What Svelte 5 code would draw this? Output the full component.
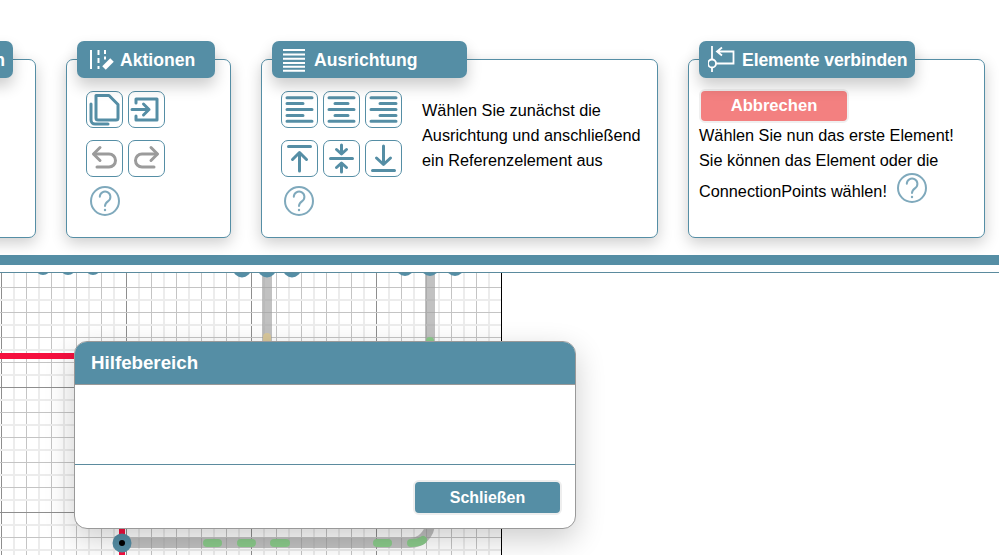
<script>
  const helpText = "Wählen Sie nun das erste Element!";

  // grid lines of the canvas, in page coordinates
  const steps = Array.from({ length: 21 }, (_, i) => i);
  const rows = Array.from({ length: 12 }, (_, i) => i);
  const greens = ["M207 543H218", "M241 543H252", "M274 543H286", "M377 543H388", "M411 543q8 0 12-3"];
  const points = [
    { x: 43, y: 267, r: 8 },
    { x: 68, y: 267, r: 8 },
    { x: 93, y: 267, r: 8 },
    { x: 242, y: 268.5, r: 9 },
    { x: 267, y: 268.5, r: 9 },
    { x: 292, y: 268.5, r: 9 },
    { x: 405, y: 267, r: 9 },
    { x: 430, y: 267, r: 9 },
    { x: 455, y: 267, r: 9 }
  ];
</script>

{#snippet help()}
  <svg class="help" width="30" height="30" viewBox="0 0 30 30">
    <circle class="help-ring" cx="15" cy="15" r="14" />
    <path class="help-mark" d="M9.8 10.8a5.3 5.3 0 1 1 8.4 4.3c-2 1.4-3.2 2.4-3.2 5" />
    <circle class="help-dot" cx="15" cy="24" r="1.2" />
  </svg>
{/snippet}

<main class="app">
  <section class="ribbon">
    <div class="card card-view">
      <h2 class="tab tab-view"><span>Optionen</span></h2>
    </div>

    <div class="card card-actions">
      <h2 class="tab tab-actions">
        <svg width="28" height="24" viewBox="0 0 28 24" class="tab-icon">
          <path d="M5 1v19" stroke-width="2" />
          <path d="M12.500 1v5M12.500 9v5M12.500 17v3" stroke-width="2" />
          <path d="M19 1v4M19 7.500v3" stroke-width="2" />
          <path d="M18 19l8-8" stroke-width="5" />
        </svg>
        <span>Aktionen</span>
      </h2>
      <div class="tools">
        <button class="tool" aria-label="Kopieren">
          <svg viewBox="0 0 37 37">
            <path d="M10 4.500h13l9 9v13.500a2 2 0 0 1-2 2H12a2 2 0 0 1-2-2z" />
            <path d="M5 13v16a4 4 0 0 0 4 4h13" />
          </svg>
        </button>
        <button class="tool" aria-label="Einfügen">
          <svg viewBox="0 0 37 37">
            <path d="M8 12V8h21v21H8v-4" />
            <path d="M4 18.500h17M15.500 13l5.500 5.500-5.500 5.500" />
          </svg>
        </button>
        <button class="tool muted" aria-label="Rückgängig">
          <svg viewBox="0 0 37 37">
            <path d="M14 7.500L7.500 14l6.500 6.500" />
            <path d="M8 14h15a6.500 6.500 0 0 1 0 13H11" />
          </svg>
        </button>
        <button class="tool muted" aria-label="Wiederholen">
          <svg viewBox="0 0 37 37">
            <path d="M23 7.500l6.500 6.500-6.500 6.500" />
            <path d="M29 14H14a6.500 6.500 0 0 0 0 13h12" />
          </svg>
        </button>
      </div>
      <div class="help-row">{@render help()}</div>
    </div>

    <div class="card card-align">
      <h2 class="tab tab-align">
        <svg width="26" height="24" viewBox="0 0 26 24" class="tab-icon">
          <path d="M2 1h22M2 5.500h22M2 9.700h22M2 13.900h22M2 17.700h22M2 21.800h22" stroke-width="2" />
        </svg>
        <span>Ausrichtung</span>
      </h2>
      <div class="align-body">
        <div>
          <div class="tools three">
            <button class="tool" aria-label="Links">
              <svg viewBox="0 0 37 37"><path d="M6 6.700h25M6 12.500h16M6 18.500h25M6 24.500h16M6 30.300h25" /></svg>
            </button>
            <button class="tool" aria-label="Mitte">
              <svg viewBox="0 0 37 37"><path d="M6 6.700h25M12 12.500h13M6 18.500h25M12 24.500h13M6 30.300h25" /></svg>
            </button>
            <button class="tool" aria-label="Rechts">
              <svg viewBox="0 0 37 37"><path d="M6 6.700h25M15 12.500h16M6 18.500h25M15 24.500h16M6 30.300h25" /></svg>
            </button>
            <button class="tool" aria-label="Oben">
              <svg viewBox="0 0 37 37"><path d="M7.500 6.500h22M18.500 31V13M11.500 19.500l7-7 7 7" /></svg>
            </button>
            <button class="tool" aria-label="Zentriert">
              <svg viewBox="0 0 37 37"><path d="M7.500 18.500h22M18.500 5v8M13.500 9.500l5 4.500 5-4.500M18.500 32v-8M13.500 27.500l5-4.500 5 4.500" /></svg>
            </button>
            <button class="tool" aria-label="Unten">
              <svg viewBox="0 0 37 37"><path d="M7.500 30.500h22M18.500 6v18M11.500 18l7 6.500 7-6.500" /></svg>
            </button>
          </div>
          <div class="help-row help-row-align">{@render help()}</div>
        </div>
        <p class="hint">Wählen Sie zunächst die<br />Ausrichtung und anschließend<br />ein Referenzelement aus</p>
      </div>
    </div>

    <div class="card card-connect">
      <h2 class="tab tab-connect">
        <svg width="30" height="30" viewBox="0 0 30 30" class="tab-icon">
          <path d="M4 0v26" stroke-width="1.800" />
          <circle cx="4" cy="17.500" r="4" stroke-width="1.800" fill="#558ea5" />
          <path d="M8 17.500h17.500V5.500H9M14 1.500L9 5.500l5 4" stroke-width="1.800" />
        </svg>
        <span>Elemente verbinden</span>
      </h2>
      <div class="connect-body">
        <button class="cancel">Abbrechen</button>
        <p class="line">{helpText}</p>
        <p class="line">Sie können das Element oder die</p>
        <p class="line last">ConnectionPoints wählen! {@render help()}</p>
      </div>
    </div>
  </section>

  <div class="bar"></div>
  <div class="bar-gap"></div>

  <div class="workspace">
    <svg class="canvas" width="502" height="282" viewBox="0 273 502 282">
      {#each steps as i}
        <rect x={13 + i * 25} y="273" width="2" height="282" fill="#ececec" />
        {#if i < 20}
          <rect x={26 + i * 25} y="273" width="1" height="282" fill={i % 5 === 4 ? "#8e8e8e" : "#c4c4c4"} />
        {/if}
      {/each}
      <rect x="1" y="273" width="1" height="282" fill="#8e8e8e" />
      {#each rows as i}
        <rect x="0" y={299 + i * 25} width="501" height="2" fill="#ececec" />
        <rect x="0" y={287 + i * 25} width="501" height="1" fill={i % 5 === 4 ? "#8e8e8e" : "#c4c4c4"} />
      {/each}
      <rect x="501" y="273" width="1" height="282" fill="#000" />

      <path class="wire" d="M267 273v75" />
      <path class="wire" d="M430 273v250a20 20 0 0 1-20 20H122" />
      <path d="M267 337v8" class="dash tan" />
      <path d="M430 341v4" class="dash green" />
      {#each greens as d}
        <path {d} class="dash green" />
      {/each}
      <path d="M0 356h80" class="red" />
      <path d="M122 525v30" class="red" />

      {#each points as p}
        <circle cx={p.x} cy={p.y} r={p.r} fill="#558ea5" />
      {/each}
      <circle cx="122" cy="543" r="9.500" fill="#558ea5" />
      <circle cx="122" cy="543" r="3" fill="#000" />
    </svg>

    <div class="dialog">
      <h3 class="dialog-title">Hilfebereich</h3>
      <div class="dialog-body"></div>
      <div class="dialog-foot">
        <button class="close">Schließen</button>
      </div>
    </div>
  </div>
</main>

<style>
  :global(body) {
    background: #fff;
  }
  .app {
    height: 555px;
    width: 999px;
    overflow: hidden;
    display: flex;
    flex-direction: column;
    font-family: "Liberation Sans", Arial, sans-serif;
    font-size: 16.25px;
    color: #000;
  }
  .ribbon {
    flex: none;
    height: 196px;
    padding-top: 59px;
    margin-left: -114px;
    display: flex;
    gap: 30px;
  }
  .card {
    flex: none;
    position: relative;
    box-sizing: border-box;
    height: 179px;
    background: #fff;
    border: 1px solid #558ea5;
    border-radius: 7px;
    box-shadow: 0 5px 15px rgba(0, 0, 0, 0.2);
  }
  .card-view {
    width: 150px;
  }
  .card-actions {
    width: 165px;
    padding: 31px 19px 0;
  }
  .card-align {
    width: 397px;
    padding: 31px 19px 0;
  }
  .card-connect {
    width: 297px;
    padding: 29px 10px 0;
  }
  .tab {
    position: absolute;
    top: -19px;
    left: 10px;
    box-sizing: border-box;
    height: 37px;
    margin: 0;
    padding-top: 2px;
    display: flex;
    align-items: center;
    background: #558ea5;
    color: #fff;
    border-radius: 7px;
    font-size: 17.6px;
    font-weight: bold;
    box-shadow: 0 8px 15px rgba(0, 0, 0, 0.2);
  }
  .tab-view {
    width: 116px;
    justify-content: flex-end;
    padding-right: 8px;
  }
  .tab-actions {
    width: 138px;
    padding-left: 9px;
    gap: 6px;
  }
  .tab-align {
    width: 195px;
    padding-left: 9px;
    gap: 7px;
  }
  .tab-connect {
    width: 216px;
    padding-left: 9px;
    gap: 4px;
    letter-spacing: -0.1px;
  }
  .tab-icon {
    flex: none;
    fill: none;
    stroke: #fff;
  }
  .tools {
    display: grid;
    grid-template-columns: repeat(2, 37px);
    column-gap: 5px;
    row-gap: 12px;
  }
  .tools.three {
    grid-template-columns: repeat(3, 37px);
  }
  .tool {
    width: 37px;
    height: 37px;
    padding: 0;
    background: #fff;
    border: 1px solid #558ea5;
    border-radius: 7px;
    box-sizing: border-box;
    overflow: hidden;
  }
  .tool svg {
    display: block;
    margin: -1px;
    width: 37px;
    height: 37px;
    fill: none;
    stroke: #558ea5;
    stroke-width: 3;
    stroke-linecap: round;
    stroke-linejoin: round;
  }
  .tool.muted svg {
    stroke: #9b9b9b;
  }
  .help-row {
    margin: 9px 0 0 4px;
    height: 30px;
  }
  .help-row-align {
    margin-left: 3px;
  }
  .help {
    display: inline-block;
    flex: none;
  }
  .help-ring {
    fill: none;
    stroke: #7fa9bc;
    stroke-width: 2;
  }
  .help-mark {
    fill: none;
    stroke: #7fa9bc;
    stroke-width: 2;
    stroke-linecap: round;
  }
  .help-dot {
    fill: #7fa9bc;
  }
  .align-body {
    display: flex;
    gap: 20px;
  }
  .hint {
    margin: 7px 0 0;
    line-height: 25px;
    white-space: nowrap;
  }
  .connect-body {
    display: flex;
    flex-direction: column;
    align-items: flex-start;
  }
  .cancel {
    box-sizing: border-box;
    width: 150px;
    height: 34px;
    padding: 0;
    background: #f38080;
    color: #fff;
    border: 2px solid #f0f0f0;
    border-radius: 6px;
    font: bold 16.6px "Liberation Sans", Arial, sans-serif;
  }
  .line {
    margin: 0;
    line-height: 25px;
    white-space: nowrap;
  }
  .last {
    display: flex;
    align-items: center;
    gap: 10px;
    margin-top: 3px;
    height: 30px;
  }
  .last .help {
    margin-bottom: 6px;
  }
  .bar {
    flex: none;
    height: 10px;
    background: #558ea5;
  }
  .bar-gap {
    flex: none;
    height: 7px;
    border-bottom: 1px solid #5b8b9e;
  }
  .workspace {
    position: relative;
    flex: 1;
    overflow: hidden;
  }
  .canvas {
    display: block;
  }
  .wire {
    fill: none;
    stroke: #a0a0a0;
    stroke-opacity: 0.65;
    stroke-width: 10;
  }
  .dash {
    fill: none;
    stroke-width: 8;
    stroke-linecap: round;
  }
  .green {
    stroke: #8bcb8b;
  }
  .tan {
    stroke: #d8c79b;
  }
  .red {
    fill: none;
    stroke: #f5103f;
    stroke-width: 6;
  }
  .dialog {
    position: absolute;
    left: 74px;
    top: 68px;
    box-sizing: border-box;
    width: 502px;
    height: 188px;
    display: flex;
    flex-direction: column;
    background: #fff;
    border: 1px solid #999;
    border-radius: 13px;
    overflow: hidden;
    box-shadow: 0 10px 30px rgba(0, 0, 0, 0.2);
  }
  .dialog-title {
    flex: none;
    box-sizing: border-box;
    height: 43px;
    margin: 0;
    padding: 0 16px;
    display: flex;
    align-items: center;
    background: #558ea5;
    color: #fff;
    font-size: 18.72px;
    border-bottom: 1px solid #999;
  }
  .dialog-body {
    flex: none;
    height: 79px;
    border-bottom: 1px solid #5b8b9e;
  }
  .dialog-foot {
    flex: 1;
    display: flex;
    justify-content: flex-end;
    align-items: flex-start;
    padding: 15px 13px 0 0;
  }
  .close {
    box-sizing: border-box;
    width: 149px;
    height: 35px;
    padding: 0;
    background: #558ea5;
    color: #fff;
    border: 2px solid #eee;
    border-radius: 6px;
    font: bold 16px "Liberation Sans", Arial, sans-serif;
  }
</style>
